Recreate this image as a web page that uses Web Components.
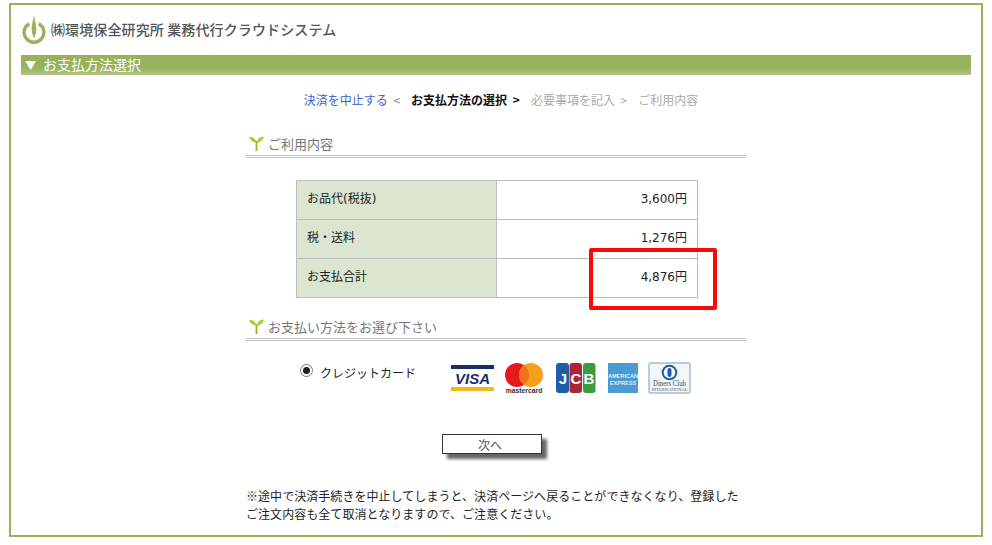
<!DOCTYPE html>
<html lang="ja">
<head>
<meta charset="utf-8">
<style>
  html, body { margin: 0; background: #fff; }
  body { font-family: "Noto Sans CJK JP", "Liberation Sans", sans-serif; color: #222; }
</style>
</head>
<body>
<pay-frame>
  <site-header slot="head">㈱環境保全研究所 業務代行クラウドシステム</site-header>
  <title-bar>お支払方法選択</title-bar>
  <step-nav></step-nav>
  <pay-section heading="ご利用内容">
    <fee-table></fee-table>
  </pay-section>
  <pay-section heading="お支払い方法をお選び下さい" class="second">
    <card-choice></card-choice>
  </pay-section>
  <next-button>次へ</next-button>
  <pay-note>※途中で決済手続きを中止してしまうと、決済ページへ戻ることができなくなり、登録した<br>ご注文内容も全て取消となりますので、ご注意ください。</pay-note>
</pay-frame>

<script>
class PayFrame extends HTMLElement {
  constructor() {
    super();
    this.attachShadow({ mode: 'open' }).innerHTML = `
      <style>
        :host { display: block; box-sizing: border-box; position: relative; width: 974px; height: 534px; margin: 3px 0 0 9px; border: 2px solid #98b25c; padding: 0 10px; overflow: hidden; }
        .flag { position: absolute; left: 578px; top: 243px; width: 128px; height: 62px; box-sizing: border-box; border: 4px solid #f80a0a; border-radius: 2px; }
      </style>
      <slot name="head"></slot>
      <slot></slot>
      <div class="flag"></div>`;
  }
}

class SiteHeader extends HTMLElement {
  constructor() {
    super();
    this.attachShadow({ mode: 'open' }).innerHTML = `
      <style>
        :host { display: flex; align-items: center; height: 50px; gap: 5px; padding-left: 1px; font-size: 14px; letter-spacing: 0.12px; color: #555; font-weight: 500; }
        svg { flex: none; margin-top: -1px; }
        span { margin-top: -2px; }
      </style>
      <svg width="24" height="30" viewBox="0 0 24 30">
        <path d="M7.3 8.7 A9.9 9.9 0 1 0 16.7 8.7" fill="none" stroke="#98b25c" stroke-width="3.4"/>
        <path d="M12 0 C12.6 5 14.4 9 14.4 14 C14.4 18 13 21 12 23.5 C11 21 9.6 18 9.6 14 C9.6 9 11.4 5 12 0 Z" fill="#98b25c"/>
      </svg>
      <span><slot></slot></span>`;
  }
}

class TitleBar extends HTMLElement {
  constructor() {
    super();
    this.attachShadow({ mode: 'open' }).innerHTML = `
      <style>
        :host { display: flex; align-items: center; gap: 7px; height: 20px; padding-left: 4px; font-size: 14px; line-height: 18px; color: #fff; background: linear-gradient(#98b25c 0, #98b25c 60%, #a9be78 90%, #b3c58a 100%); white-space: nowrap; }
        i { font-style: normal; font-size: 11px; width: 11px; line-height: 18px; }
        span { margin-top: -3px; }
      </style>
      <i>▼</i><span><slot></slot></span>`;
  }
}

class StepNav extends HTMLElement {
  constructor() {
    super();
    this.attachShadow({ mode: 'open' }).innerHTML = `
      <style>
        :host { display: flex; justify-content: center; gap: 11px; margin-top: 15px; padding-left: 10px; font-size: 12px; line-height: 20px; word-spacing: 3px; white-space: nowrap; color: #aaa; }
        a { color: #3d62c4; text-decoration: none; }
        b { color: #111; font-weight: 700; }
      </style>
      <span><a href="#">決済を中止する</a> <span style="color:#6a86d0">&lt;</span></span>
      <b>お支払方法の選択 &gt;</b>
      <span>必要事項を記入 &gt;</span>
      <span>ご利用内容</span>`;
  }
}

class PaySection extends HTMLElement {
  constructor() {
    super();
    this.attachShadow({ mode: 'open' }).innerHTML = `
      <style>
        :host { display: block; width: 500px; margin: 23px auto 0; }
        :host(.second) { margin-top: 18px; }
        h2 { margin: 0; display: flex; align-items: center; gap: 4px; height: 22px; padding-left: 3px; font-size: 13px; font-weight: 400; color: #777; line-height: 22px; border-bottom: 3px double #c4c4c4; }
        svg { flex: none; margin-top: -2px; }
      </style>
      <h2>
        <svg width="15" height="15" viewBox="0 0 15 15">
          <path d="M7.5 15 L7.5 5" stroke="#8dbb1e" stroke-width="1.8" fill="none"/>
          <path d="M7.5 6.5 C6.5 2.5 4 .8 .2 .8 C.8 4.5 4 6.5 7.5 6.5 Z" fill="#a5cf2e"/>
          <path d="M7.5 6.5 C8.5 2.5 11 .5 14.8 .5 C14.2 4.5 11 6.5 7.5 6.5 Z" fill="#a5cf2e"/>
        </svg>
        <span></span>
      </h2>
      <slot></slot>`;
    this.shadowRoot.querySelector('span').textContent = this.getAttribute('heading');
  }
}

class FeeTable extends HTMLElement {
  constructor() {
    super();
    const rows = [['お品代(税抜)', '3,600円'], ['税・送料', '1,276円'], ['お支払合計', '4,876円']];
    this.attachShadow({ mode: 'open' }).innerHTML = `
      <style>
        :host { display: block; width: 402px; margin: 22px auto 0 50px; }
        table { border-collapse: collapse; width: 402px; table-layout: fixed; font-family: "DejaVu Sans", "Noto Sans CJK JP", sans-serif; font-size: 12px; color: #222; }
        td { border: 1px solid #bdbdbd; height: 39px; padding: 0 10px 5px; box-sizing: border-box; }
        td:first-child { width: 200px; background: #dce5cf; }
        td:last-child { text-align: right; }
      </style>
      <table>${rows.map(r => `<tr><td>${r[0]}</td><td>${r[1]}</td></tr>`).join('')}</table>`;
  }
}

class CardChoice extends HTMLElement {
  constructor() {
    super();
    this.attachShadow({ mode: 'open' }).innerHTML = `
      <style>
        :host { display: flex; align-items: flex-start; margin-top: 20px; padding-left: 54px; height: 40px; font-size: 12px; color: #222; }
        .radio { width: 13px; height: 13px; box-sizing: border-box; border: 1px solid #777; border-radius: 50%; margin-top: 3px; display: flex; align-items: center; justify-content: center; background: #fff; flex: none; }
        .radio i { width: 7px; height: 7px; border-radius: 50%; background: #222; }
        label { margin: 3px 0 0 7px; line-height: 18px; width: 130px; flex: none; }
        .cards { display: flex; align-items: flex-start; }
        svg { display: block; flex: none; }
        text { font-family: "Liberation Sans", sans-serif; }
      </style>
      <div class="radio"><i></i></div>
      <label>クレジットカード</label>
      <div class="cards">
        <svg width="45" height="32" viewBox="0 0 45 32" style="margin-right:9px">
          <rect x="1" y="4" width="43" height="4" fill="#1a2d6e"/>
          <text x="22.5" y="23" text-anchor="middle" font-size="15" font-weight="700" font-style="italic" fill="#1a2d6e">VISA</text>
          <rect x="1" y="26" width="43" height="4" fill="#f2b81c"/>
        </svg>
        <svg width="40" height="33" viewBox="0 0 40 33" style="margin-right:11px">
          <circle cx="13" cy="14" r="12" fill="#e8191e"/>
          <circle cx="27" cy="14" r="12" fill="#f79e1b"/>
          <path d="M20 4.3 A12 12 0 0 1 20 23.7 A12 12 0 0 1 20 4.3 Z" fill="#f4701c"/>
          <text x="20" y="32" text-anchor="middle" font-size="6.8" font-weight="700" fill="#333">mastercard</text>
        </svg>
        <svg width="41" height="32" viewBox="0 0 41 32" style="margin-right:11px">
          <rect x="1" y="2" width="13" height="30" rx="3" fill="#1d5ea8"/>
          <rect x="14.5" y="2" width="12.5" height="30" rx="3" fill="#b0243a"/>
          <rect x="28" y="2" width="12.5" height="30" rx="3" fill="#3c9a3f"/>
          <text x="8" y="23" text-anchor="middle" font-size="15" font-weight="700" fill="#fff">J</text>
          <text x="21" y="23" text-anchor="middle" font-size="15" font-weight="700" fill="#fff">C</text>
          <text x="34" y="23" text-anchor="middle" font-size="15" font-weight="700" fill="#fff">B</text>
        </svg>
        <svg width="32" height="32" viewBox="0 0 32 32" style="margin-right:9px">
          <rect x="1" y="2" width="30" height="30" fill="#4a9ad4"/>
          <text x="16" y="17" text-anchor="middle" font-size="5.6" font-weight="700" fill="#dcecf8">AMERICAN</text>
          <text x="16" y="24" text-anchor="middle" font-size="5.6" font-weight="700" fill="#dcecf8">EXPRESS</text>
        </svg>
        <svg width="43" height="33" viewBox="0 0 43 33">
          <rect x="1" y="2" width="41" height="30" rx="2" fill="#f4f7fa" stroke="#a5bacb" stroke-width="1.5"/>
          <circle cx="21.5" cy="11.5" r="6.8" fill="#fff" stroke="#1f5fa8" stroke-width="2"/>
          <rect x="19.5" y="7" width="4" height="9" rx="2" fill="#1f5fa8"/>
          <text x="21.5" y="25" text-anchor="middle" font-size="8" textLength="33" lengthAdjust="spacingAndGlyphs" style="font-family:'Liberation Serif',serif" fill="#444">Diners Club</text>
          <text x="21.5" y="29.5" text-anchor="middle" font-size="4" textLength="36" lengthAdjust="spacingAndGlyphs" style="font-family:'Liberation Serif',serif" fill="#555">INTERNATIONAL</text>
        </svg>
      </div>`;
  }
}

class NextButton extends HTMLElement {
  constructor() {
    super();
    this.attachShadow({ mode: 'open' }).innerHTML = `
      <style>
        :host { display: block; width: 100px; margin: 33px auto 0; padding-right: 8px; }
        button { display: block; box-sizing: border-box; width: 100px; height: 20px; padding: 0 4px 0 0; border: 1px solid #333; background: #fff; color: #555; font: inherit; font-size: 12px; line-height: 17px; box-shadow: 5px 5px 3px #666; }
      </style>
      <button type="button"><slot></slot></button>`;
  }
}

class PayNote extends HTMLElement {
  constructor() {
    super();
    this.attachShadow({ mode: 'open' }).innerHTML = `
      <style>
        :host { display: block; width: 500px; margin: 33px auto 0; font-size: 12px; letter-spacing: 0.05px; line-height: 18px; color: #222; white-space: nowrap; }
      </style>
      <slot></slot>`;
  }
}

customElements.define('pay-frame', PayFrame);
customElements.define('site-header', SiteHeader);
customElements.define('title-bar', TitleBar);
customElements.define('step-nav', StepNav);
customElements.define('pay-section', PaySection);
customElements.define('fee-table', FeeTable);
customElements.define('card-choice', CardChoice);
customElements.define('next-button', NextButton);
customElements.define('pay-note', PayNote);
</script>
</body>
</html>
